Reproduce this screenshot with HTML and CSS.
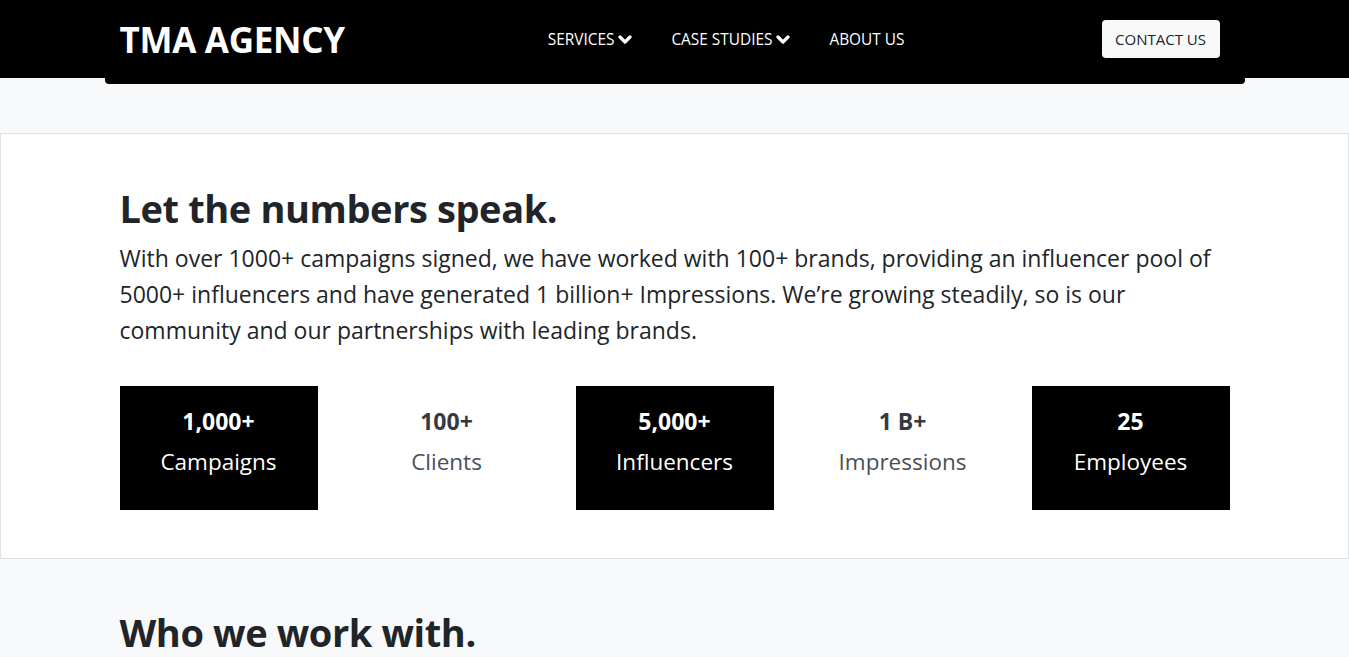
FILE: index.html
```html
<!DOCTYPE html>
<html lang="en">
<head>
<meta charset="utf-8">
<title>TMA Agency</title>
<link rel="stylesheet" href="styles.css">
</head>
<body>
<header class="topbar">
  <div class="container nav-inner">
    <a class="brand" href="#">TMA AGENCY</a>
    <nav class="nav">
      <a class="nav-link" href="#">SERVICES <svg class="chev" viewBox="0 0 14 10" width="14" height="10"><polyline points="2,2 7,7 12,2" fill="none" stroke="#fff" stroke-width="3.2" stroke-linecap="round" stroke-linejoin="round"/></svg></a>
      <a class="nav-link" href="#">CASE STUDIES <svg class="chev" viewBox="0 0 14 10" width="14" height="10"><polyline points="2,2 7,7 12,2" fill="none" stroke="#fff" stroke-width="3.2" stroke-linecap="round" stroke-linejoin="round"/></svg></a>
      <a class="nav-link" href="#">ABOUT US</a>
    </nav>
    <a class="btn-contact" href="#">CONTACT US</a>
  </div>
</header>

<section class="numbers">
  <div class="container">
    <h1 class="title">Let the numbers speak.</h1>
    <p class="lead">With over 1000+ campaigns signed, we have worked with 100+ brands, providing an influencer pool of 5000+ influencers and have generated 1 billion+ Impressions. We’re growing steadily, so is our community and our partnerships with leading brands.</p>
    <div class="stats">
      <div class="stat-col"><div class="stat dark"><div class="num">1,000+</div><div class="label">Campaigns</div></div></div>
      <div class="stat-col"><div class="stat"><div class="num">100+</div><div class="label">Clients</div></div></div>
      <div class="stat-col"><div class="stat dark"><div class="num">5,000+</div><div class="label">Influencers</div></div></div>
      <div class="stat-col"><div class="stat"><div class="num">1 B+</div><div class="label">Impressions</div></div></div>
      <div class="stat-col"><div class="stat dark"><div class="num">25</div><div class="label">Employees</div></div></div>
    </div>
  </div>
</section>

<section class="clients">
  <div class="container">
    <h1 class="title">Who we work with.</h1>
  </div>
</section>
</body>
</html>
```

FILE: styles.css
```css
* { box-sizing: border-box; }
html, body { margin: 0; padding: 0; }
body {
  background: #f8f9fa;
  font-family: "Open Sans", "Noto Sans", sans-serif;
  color: #212529;
  overflow: hidden;
}
a { text-decoration: none; }

.container {
  width: 1140px;
  margin: 0 auto;
  padding: 0 15px;
}

.topbar {
  background: #000;
  height: 78px;
}
.nav-inner {
  background: #000;
  height: 84px;
  border-radius: 0 0 4px 4px;
  display: flex;
  align-items: flex-start;
  justify-content: space-between;
  padding-right: 25px;
}
.brand {
  color: #fff;
  font-weight: 700;
  font-size: 35px;
  line-height: 40px;
  margin-top: 20px;
  letter-spacing: -0.3px;
}
.nav {
  display: flex;
  gap: 39px;
  margin-top: 28px;
  margin-left: 6px;
}
.nav-link {
  color: #fff;
  font-size: 15.4px;
  line-height: 24px;
  display: flex;
  align-items: center;
  gap: 4px;
}
.chev { display: block; margin-top: -1px; }
.btn-contact {
  margin-top: 20px;
  background: #f8f9fa;
  color: #212529;
  font-size: 15px;
  line-height: 24px;
  height: 38px;
  padding: 7px 12px;
  border-radius: 4px;
  width: 118px;
  text-align: center;
}

.numbers {
  margin-top: 55px;
  background: #fff;
  border: 1px solid #dee2e6;
  padding: 50px 0 48px;
}
.title {
  margin: 0 0 8px;
  font-size: 38px;
  line-height: 48px;
  font-weight: 700;
  color: #212529;
  letter-spacing: -0.4px;
}
.lead {
  margin: 0;
  font-size: 23px;
  line-height: 36px;
  color: #212529;
}
.stats {
  display: flex;
  margin: 38px -15px 0;
}
.stat-col {
  width: 228px;
  padding: 0 15px;
}
.stat {
  height: 124px;
  text-align: center;
  padding-top: 21px;
  color: #495057;
}
.stat .num {
  font-size: 23px;
  font-weight: 700;
  line-height: 29px;
  margin-bottom: 8px;
  color: #343a40;
}
.stat .label {
  font-size: 22.5px;
  line-height: 36px;
}
.stat.dark { background: #000; color: #fff; }
.stat.dark .num { color: #fff; }

.clients {
  padding: 49px 0;
}
```
